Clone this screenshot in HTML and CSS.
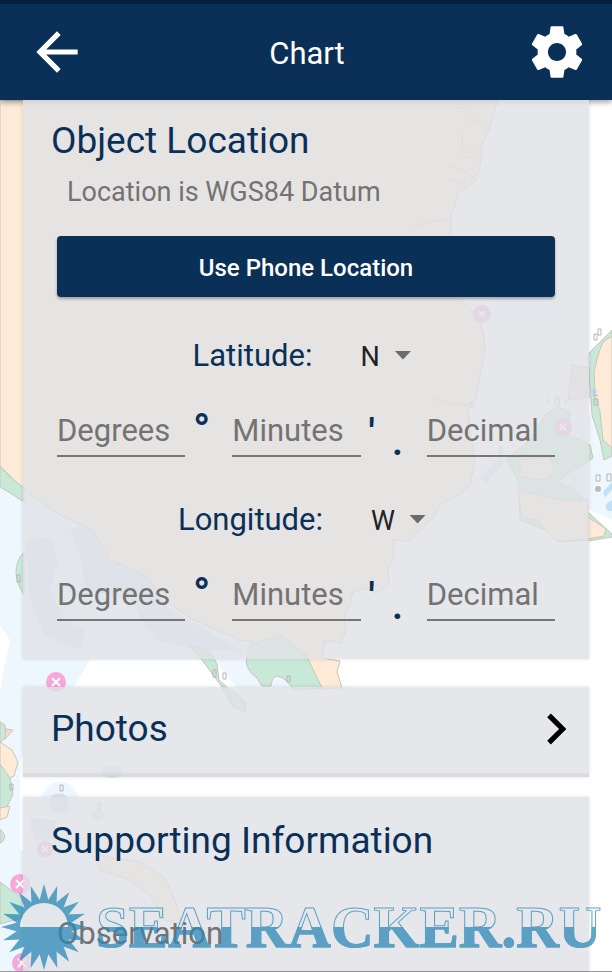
FILE: index.html
```
<!DOCTYPE html>
<html lang="en">
<head>
    <meta charset="UTF-8">
    <meta name="viewport" content="width=device-width, initial-scale=1.0">
    <title>Chart</title>
    <link rel="stylesheet" href="styles.css">
</head>
<body>
    <!-- nautical chart behind the cards -->
    <svg class="chart-map" viewBox="0 0 612 972" preserveAspectRatio="xMidYMin slice" aria-hidden="true">
        <g fill="#eef7fe">
            <path d="M0 470L24 490 100 540 180 610 250 640 300 660 318 690 240 692 215 660H90L72 690 60 700 20 760V850H0V690L10 640 0 625z"/>
            <path d="M590 415L612 455V520L590 510 540 480 560 430z"/>
            <circle cx="60" cy="800" r="18"/>
            <path d="M0 850H24L60 830 120 850 60 972H0z"/>
            <path d="M495 300H560V320H500z"/>
        </g>
        <g fill="#d9e7f1">
            <path d="M25 540L50 538 58 560 50 590 65 620 85 630 80 650 45 635 30 600z"/>
            <path d="M70 530L92 520 120 550 145 570 170 610 215 635 240 650 200 650 155 640 130 600 85 590 82 560z"/>
            <circle cx="59" cy="803" r="10"/>
            <circle cx="98" cy="815" r="6"/>
            <ellipse cx="112" cy="772" rx="10" ry="6"/>
            <path d="M28 818L55 820 57 838 35 840z"/>
            <path d="M222 686L247 702 245 712 232 708z"/>
            <path d="M480 478L500 456 505 462 486 484z"/>
        </g>
        <g stroke="#c9c5bd" stroke-width="1">
            <path fill="#fdebd8" d="M0 100H498L493 116 487 135 482 145 481 162 476 180 466 188 458 192 455 205 451 215V232L458 280 462 300 478 318 484 335 485 350 480 375 476 398 468 405 470 430 475 460 470 485 458 495 440 505 433 518 420 530 408 541 393 540 394 558 388 568 389 585 376 593 365 588 353 592 350 605 344 618 346 630 341 643 325 640 322 658 340 661 337 672 342 688 322 689 305 658 280 648 240 640 190 618 165 600 145 575 110 560 92 530 60 515 24 490 0 466z"/>
            <path fill="#c8e9d8" d="M0 466L8 475 24 488 24 502 12 494 0 487z"/>
            <path fill="#c8e9d8" d="M24 552Q8 570 24 595z"/>
            <path fill="#c8e9d8" d="M246 662Q248 672 257 678L262 686H271Q272 676 278 676 286 678 294 690L322 688 306 655 280 635 250 645z"/>
            <path fill="#c8e9d8" d="M190 645L210 652 217 664 219 680 228 688 222 687 202 660z"/>
            <path fill="#c8e9d8" d="M222 687L232 690 246 702 245 712 232 705z"/>
            <path fill="#fdebd8" d="M0 742L12 750 18 762 14 776 0 782z"/>
            <path fill="#c8e9d8" d="M0 722L5 725 6 738 0 742z"/>
            <path fill="#fbdcd0" d="M6 729L13 730 5 739z"/>
            <path fill="#c8e9d8" d="M0 764L10 778 13 795 6 808 0 810z"/>
            <path fill="#fdebd8" d="M0 808L10 806 7 817 0 820z"/>
            <path fill="#c8e9d8" d="M0 829Q8 836 2 842L0 843z"/>
            <path fill="#c8e9d8" d="M0 882L22 898V918L0 924z"/>
            <path fill="#fdebd8" d="M95 855L140 862 165 878 175 900 182 925 165 920 150 895 130 880 100 870z"/>
            <path fill="#c8e9d8" d="M612 330L590 352 588 358 592 415 600 440 604 460 612 456z"/>
            <path fill="#fdebd8" d="M612 336L603 342 598 355 594 372 595 395 600 412 603 440 612 448z"/>
            <path fill="#c8e9d8" d="M506 460L530 440 545 415 558 407 570 412 568 435 590 445 593 458 570 472 558 482 575 490 588 505 589 540 560 542 545 530 520 520 518 480z"/>
            <path fill="#fdebd8" d="M520 460L550 457 555 470 545 480 520 477zM518 490L560 500 588 500V540L556 541 545 530 538 520 522 518z"/>
            <path fill="#c8e9d8" d="M588 512L612 534V537L588 541z"/>
            <path fill="#fdebd8" d="M588 517L606 529 604 536 588 539z"/>
            <path fill="#eadfd5" d="M572 365L589 368V398L568 400z"/>
        </g>
        <path fill="#bfe0f5" d="M612 482L603 492 605 497 612 490zM612 500Q602 505 608 511H612zM592 388L597 390 596 396 590 395z"/>
        <path fill="none" stroke="#cfcac2" d="M457 108L470 107M467 120L478 120 483 128M462 135V148L473 156 478 150M460 155L472 158M450 166L462 170 474 178M448 179L466 183M407 229L430 221 451 220M432 399L450 403 468 405"/>
        <g fill="#f7a8da">
            <circle cx="56" cy="682" r="10"/>
            <circle cx="45" cy="849" r="8"/>
            <circle cx="20" cy="884" r="10"/>
            <circle cx="22" cy="963" r="10"/>
            <circle cx="482" cy="314" r="9"/>
            <circle cx="563" cy="427" r="9"/>
        </g>
        <path fill="none" stroke="#fff" stroke-width="2" d="M52 678L60 686M60 678L52 686M42 846L48 852M48 846L42 852M16 880L24 888M24 880L16 888M18 959L26 967M26 959L18 967M479 311L485 317M485 311L479 317M560 424L566 430M566 424L560 430"/>
        <g fill="none" stroke="#b5b5b5">
            <path d="M17 575H20V582H17zM213 670H216V677H213zM223 673H226V679H223zM287 676H290V682H287zM60 785H63V791H60zM10 784H13V790H10zM98 803H101V809H98zM594 334H597V340H594zM598 329H601V335H598zM594 399H598V405H594zM596 475H600V481H596zM607 474H611V481H607zM471 403H474V408H471zM499 447H502V453H499z"/>
            <path d="M594 389V396L598 395M586 390V396M548 398V405M555 398H559V405H555zM566 400V404"/>
        </g>
        <circle cx="598" cy="489" r="3" fill="#bbb"/>
    </svg>

    <header class="topbar">
        <button class="icon-btn" aria-label="Back">
            <svg viewBox="0 0 24 24"><path d="M20 11H7.83l5.59-5.59L12 4l-8 8 8 8 1.41-1.41L7.83 13H20v-2z"/></svg>
        </button>
        <h1>Chart</h1>
        <button class="icon-btn" aria-label="Settings">
            <svg viewBox="0 0 24 24"><path d="M19.43 12.98c.04-.32.07-.64.07-.98s-.03-.66-.07-.98l2.11-1.65c.19-.15.24-.42.12-.64l-2-3.46c-.12-.22-.39-.3-.61-.22l-2.49 1c-.52-.4-1.08-.73-1.69-.98l-.38-2.65C14.46 2.18 14.25 2 14 2h-4c-.25 0-.46.18-.49.42l-.38 2.65c-.61.25-1.17.59-1.69.98l-2.49-1c-.23-.09-.49 0-.61.22l-2 3.46c-.13.22-.07.49.12.64l2.11 1.65c-.04.32-.07.65-.07.98s.03.66.07.98l-2.11 1.65c-.19.15-.24.42-.12.64l2 3.46c.12.22.39.3.61.22l2.49-1c.52.4 1.08.73 1.69.98l.38 2.65c.03.24.24.42.49.42h4c.25 0 .46-.18.49-.42l.38-2.65c.61-.25 1.17-.59 1.69-.98l2.49 1c.23.09.49 0 .61-.22l2-3.46c.12-.22.07-.49-.12-.64l-2.11-1.65zM12 15.5c-1.93 0-3.5-1.57-3.5-3.5s1.57-3.5 3.5-3.5 3.5 1.57 3.5 3.5-1.57 3.5-3.5 3.5z"/></svg>
        </button>
    </header>

    <main>
        <section class="card location">
            <h2>Object Location</h2>
            <p class="hint">Location is WGS84 Datum</p>
            <button class="primary">Use Phone Location</button>

            <div class="direction">
                <label for="lat-dir">Latitude:</label>
                <span class="dropdown">
                    <select id="lat-dir">
                        <option>N</option>
                        <option>S</option>
                    </select>
                </span>
            </div>
            <div class="coords">
                <input type="text" placeholder="Degrees" aria-label="Latitude degrees">
                <span class="mark degree">°</span>
                <input type="text" placeholder="Minutes" aria-label="Latitude minutes">
                <span class="mark minute"><span>'</span><span class="point">.</span></span>
                <input type="text" placeholder="Decimal" aria-label="Latitude decimal">
            </div>

            <div class="direction">
                <label for="lon-dir">Longitude:</label>
                <span class="dropdown">
                    <select id="lon-dir">
                        <option>W</option>
                        <option>E</option>
                    </select>
                </span>
            </div>
            <div class="coords">
                <input type="text" placeholder="Degrees" aria-label="Longitude degrees">
                <span class="mark degree">°</span>
                <input type="text" placeholder="Minutes" aria-label="Longitude minutes">
                <span class="mark minute"><span>'</span><span class="point">.</span></span>
                <input type="text" placeholder="Decimal" aria-label="Longitude decimal">
            </div>
        </section>

        <section class="card photos">
            <h2>Photos</h2>
            <button class="icon-btn" aria-label="Open photos">
                <svg viewBox="0 0 24 24"><path d="M10 6L8.59 7.41 13.17 12l-4.58 4.59L10 18l6-6z"/></svg>
            </button>
        </section>

        <section class="card info">
            <h2>Supporting Information</h2>
            <input type="text" placeholder="Observation" aria-label="Observation">
        </section>
    </main>

    <div class="watermark">
        <svg viewBox="-44 -44 88 88" aria-hidden="true">
            <defs>
                <path id="ray" d="M-5-25L0-43 5-25z"/>
                <g id="rays5">
                    <use href="#ray"/>
                    <use href="#ray" transform="rotate(18)"/>
                    <use href="#ray" transform="rotate(36)"/>
                    <use href="#ray" transform="rotate(54)"/>
                    <use href="#ray" transform="rotate(72)"/>
                </g>
            </defs>
            <use href="#rays5"/>
            <use href="#rays5" transform="rotate(90)"/>
            <use href="#rays5" transform="rotate(180)"/>
            <use href="#rays5" transform="rotate(270)"/>
            <path d="M-26 0A26 26 0 0 1 26 0H24A24 24 0 0 0-24 0z"/>
            <path d="M-26 0A26 26 0 0 0 26 0z"/>
        </svg>
        <span>SEATRACKER.RU</span>
    </div>
</body>
</html>
```
FILE: styles.css
```
:root {
    --navy: #0a3058;
    --card: rgba(224, 225, 230, 0.8);
    --grey: #737373;
    --sea: #2c89b7;
}

* {
    box-sizing: border-box;
}

body {
    font-family: Roboto, "Liberation Sans", sans-serif;
    color: var(--navy);
    background: #fff;
    margin: 0;
    min-height: 100vh;
    display: flex;
    flex-direction: column;
    position: relative;
}

.chart-map {
    position: absolute;
    top: 0;
    left: 0;
    width: 100%;
    height: 100%;
    z-index: -1;
}

h1, h2, p {
    margin: 0;
    font-weight: 400;
}

button, input, select {
    font-family: inherit;
    border: none;
    padding: 0;
    margin: 0;
}

.topbar {
    display: flex;
    align-items: center;
    justify-content: space-between;
    height: 100px;
    padding: 0 24px 0 26px;
    background: var(--navy);
    border-top: 4px solid #04203d;
    box-shadow: 0 2px 6px rgba(0, 0, 0, 0.4);
    color: #fff;
}

.topbar h1 {
    font-size: 31px;
    line-height: 40px;
    padding-top: 4px;
}

.icon-btn {
    width: 62px;
    height: 62px;
    background: none;
    color: inherit;
    cursor: pointer;
}

.icon-btn svg {
    display: block;
    fill: currentColor;
}

main {
    flex: 1;
    display: flex;
    flex-direction: column;
    padding: 0 23px;
    border-bottom: 1px solid #9a9a9c;
}

.card {
    background: var(--card);
    box-shadow: 0 0 4px rgba(0, 0, 0, 0.12);
}

.card h2 {
    font-size: 37px;
    line-height: 48px;
}

.location {
    padding: 17px 34px 38px;
    margin-bottom: 28px;
}

.location h2 {
    margin-left: -6px;
}

.hint {
    margin: 11px 0 28px 10px;
    font-size: 27px;
    line-height: 32px;
    color: var(--grey);
}

.primary {
    display: block;
    width: 100%;
    height: 61px;
    padding-top: 3px;
    background: var(--navy);
    color: #fff;
    font-size: 24px;
    font-weight: 500;
    border-radius: 4px;
    box-shadow: 0 2px 3px rgba(0, 0, 0, 0.3);
    cursor: pointer;
}

.direction {
    display: flex;
    justify-content: center;
    align-items: center;
    gap: 48px;
    height: 40px;
    margin: 38px 8px 0 0;
    font-size: 31px;
}

.dropdown {
    display: flex;
    align-items: center;
}

.dropdown select {
    appearance: none;
    background: none;
    color: #222;
    font-size: 27px;
    line-height: 32px;
    padding: 3px 31px 0 0;
}

.dropdown::after {
    content: "";
    width: 17px;
    height: 9px;
    margin-left: -17px;
    background: #6b6b6b;
    clip-path: polygon(0 0, 100% 0, 50% 100%);
    pointer-events: none;
}

.coords {
    display: grid;
    grid-template-columns: 1fr 47px 1fr 66px 1fr;
    height: 48px;
    margin-top: 34px;
}

.coords + .direction {
    margin-top: 42px;
}

.coords input {
    width: 100%;
    min-width: 0;
    height: 48px;
    background: none;
    border-bottom: 2px solid #767676;
    font-size: 31px;
    padding-bottom: 4px;
}

input::placeholder {
    color: var(--grey);
    opacity: 1;
}

.mark {
    text-align: center;
    font-size: 36px;
    font-weight: 700;
    line-height: 48px;
}

.degree {
    padding-right: 14px;
    font-size: 44px;
    font-weight: 900;
    line-height: 42px;
}

.minute {
    display: flex;
    justify-content: space-between;
    padding: 0 24px 0 8px;
}

.point {
    padding-top: 10px;
}

.photos {
    display: flex;
    align-items: center;
    justify-content: space-between;
    min-height: 90px;
    padding: 0 2px 6px 28px;
    margin-bottom: 20px;
    box-shadow: 0 0 4px rgba(0, 0, 0, 0.12), inset 0 -5px 2px -1px rgba(0, 0, 0, 0.05);
}

.photos .icon-btn {
    color: #000;
}

.info {
    flex: 1;
    padding: 20px 34px 6px 28px;
}

.info input {
    width: 100%;
    height: 48px;
    margin-top: 44px;
    padding-left: 6px;
    background: none;
    font-size: 31px;
}

.watermark {
    position: fixed;
    left: 0;
    bottom: 1px;
    display: flex;
    align-items: center;
    gap: 8px;
    opacity: 0.75;
    pointer-events: none;
}

.watermark svg {
    width: 88px;
    height: 88px;
    fill: var(--sea);
}

.watermark span {
    font-family: "Liberation Serif", serif;
    font-size: 59px;
    font-weight: 700;
    line-height: 88px;
    color: transparent;
    background: linear-gradient(transparent 50%, var(--sea) 50%);
    background-clip: text;
    -webkit-background-clip: text;
    -webkit-text-stroke: 1px var(--sea);
}
```
